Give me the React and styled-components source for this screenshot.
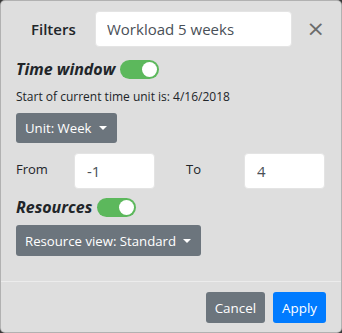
import styled, { createGlobalStyle } from "styled-components"

const Global = createGlobalStyle`
  html, body {
    margin: 0;
    background: #3a3a3a;
  }
  body {
    font-family: "Open Sans", "Noto Sans", sans-serif;
    color: #212529;
  }
`

function Toggle({ on }) {
  return (
    <Switch $on={on}>
      <Knob />
    </Switch>
  )
}

export default function App() {
  return (
    <>
      <Global />
      <Modal>
        <Header>
          <Title>Filters</Title>
          <NameInput defaultValue="Workload 5 weeks" />
          <Close aria-label="Close">×</Close>
        </Header>

        <Body>
          <SectionRow>
            <SectionTitle>Time window</SectionTitle>
            <Toggle on />
          </SectionRow>
          <Info>Start of current time unit is: 4/16/2018</Info>
          <DropButton>Unit: Week</DropButton>

          <RangeRow>
            <RangeLabel>From</RangeLabel>
            <SmallInput defaultValue="-1" />
            <RangeLabel $to>To</RangeLabel>
            <SmallInput defaultValue="4" />
          </RangeRow>

          <SectionRow $tight>
            <SectionTitle>Resources</SectionTitle>
            <Toggle on />
          </SectionRow>
          <DropButton $tall>Resource view: Standard</DropButton>
        </Body>

        <Footer>
          <Button $variant="secondary">Cancel</Button>
          <Button $variant="primary">Apply</Button>
        </Footer>
      </Modal>
    </>
  )
}

const Modal = styled.div`
  box-sizing: border-box;
  width: 342px;
  height: 333px;
  background: #dedede;
  border: 1px solid rgba(0, 0, 0, 0.2);
  border-radius: 5px;
  display: flex;
  flex-direction: column;
  overflow: hidden;
`

const Header = styled.div`
  display: flex;
  align-items: center;
  padding: 10px 16px 0 30px;
  height: 36px;
`

const Title = styled.h5`
  margin: 0;
  font-size: 15px;
  font-weight: 600;
  width: 64px;
`

const NameInput = styled.input`
  box-sizing: border-box;
  width: 197px;
  height: 36px;
  border: 1px solid #e4e4e4;
  border-radius: 4px;
  background: #fff;
  padding: 0 11px;
  font-family: inherit;
  font-size: 15px;
  color: #495057;
  outline: none;
`

const Close = styled.button`
  margin-left: auto;
  background: none;
  border: 0;
  padding: 0;
  font-family: "DejaVu Sans", sans-serif;
  font-size: 22px;
  line-height: 1;
  color: #6b6b6b;
  margin-right: 0;
`

const Body = styled.div`
  flex: 1;
  padding: 12px 15px 0;
`

const SectionRow = styled.div`
  display: flex;
  align-items: center;
  gap: 5px;
  height: 20px;
  margin-top: ${(p) => (p.$tight ? "8px" : "0")};
`

const SectionTitle = styled.span`
  font-size: 16px;
  font-weight: 700;
  font-style: italic;
`

const Switch = styled.span`
  box-sizing: border-box;
  width: 39px;
  height: 19px;
  border-radius: 10px;
  background: ${(p) => (p.$on ? "#5cb85c" : "#bbb")};
  display: flex;
  align-items: center;
  justify-content: ${(p) => (p.$on ? "flex-end" : "flex-start")};
  padding: 0 2px;
`

const Knob = styled.span`
  width: 15px;
  height: 15px;
  border-radius: 50%;
  background: #fff;
`

const Info = styled.div`
  font-size: 12px;
  margin-top: 9px;
  line-height: 17px;
`

const DropButton = styled.button`
  display: flex;
  align-items: center;
  height: ${(p) => (p.$tall ? "31px" : "30px")};
  margin-top: 8px;
  padding: 0 10px 0 9px;
  border: 0;
  border-radius: 3px;
  background: #6c757d;
  color: #fff;
  font-family: inherit;
  font-size: 13.2px;

  &::after {
    content: "";
    margin-left: 7px;
    border-top: 4px solid #fff;
    border-left: 4px solid transparent;
    border-right: 4px solid transparent;
  }
`

const RangeRow = styled.div`
  display: flex;
  align-items: center;
  margin-top: 10px;
`

const RangeLabel = styled.span`
  font-size: 13px;
  width: 58px;
  margin-left: ${(p) => (p.$to ? "31px" : "0")};
  margin-top: -4px;
`

const SmallInput = styled.input`
  box-sizing: border-box;
  width: 81px;
  height: 36px;
  border: 1px solid #e4e4e4;
  border-radius: 4px;
  background: #fff;
  padding: 0 12px;
  font-family: inherit;
  font-size: 15px;
  color: #495057;
  outline: none;
`

const Footer = styled.div`
  display: flex;
  justify-content: flex-end;
  gap: 8px;
  border-top: 1px solid #ececec;
  padding: 10px 15px 9px;
`

const Button = styled.button`
  height: 31px;
  padding: 0 9px;
  border: 0;
  border-radius: 3px;
  background: ${(p) => (p.$variant === "primary" ? "#007bff" : "#6c757d")};
  color: #fff;
  font-family: inherit;
  font-size: 13.4px;
`
